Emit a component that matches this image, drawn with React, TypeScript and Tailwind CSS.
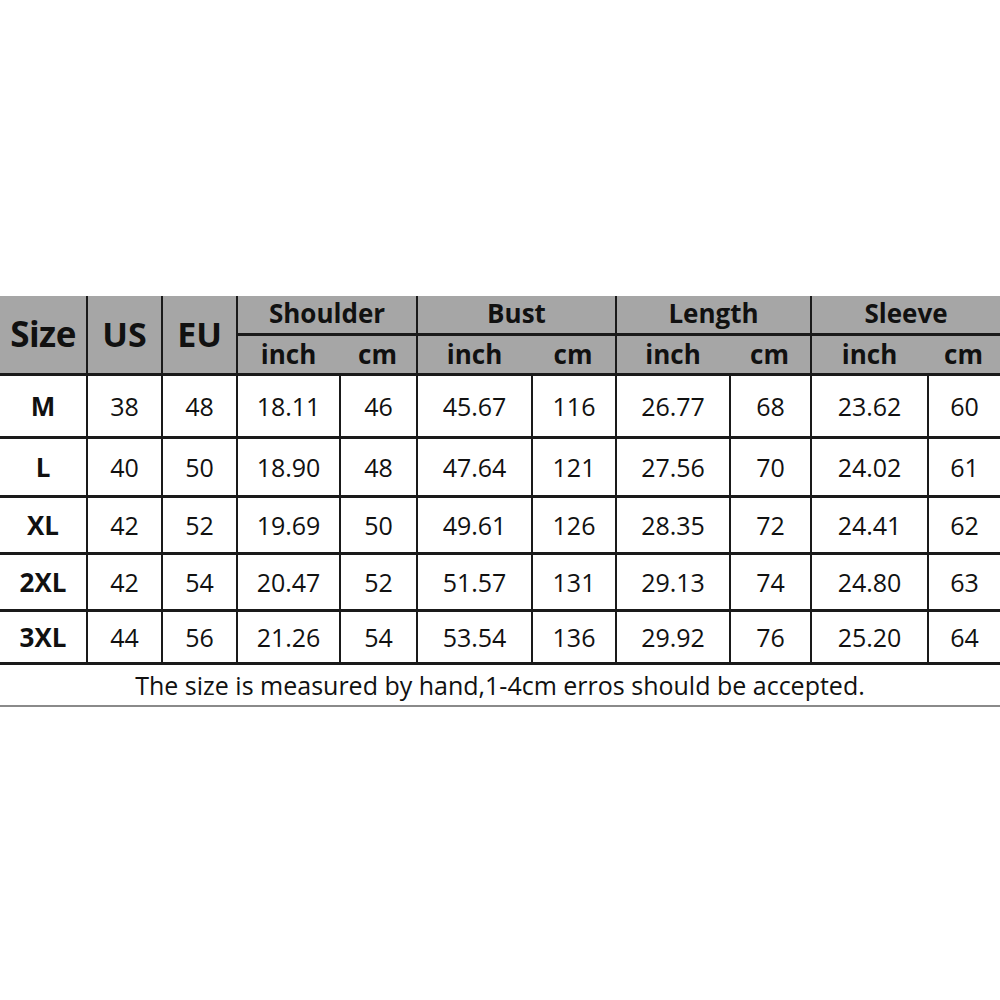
import React from 'react';

const rows = [
    ['M', '38', '48', '18.11', '46', '45.67', '116', '26.77', '68', '23.62', '60'],
    ['L', '40', '50', '18.90', '48', '47.64', '121', '27.56', '70', '24.02', '61'],
    ['XL', '42', '52', '19.69', '50', '49.61', '126', '28.35', '72', '24.41', '62'],
    ['2XL', '42', '54', '20.47', '52', '51.57', '131', '29.13', '74', '24.80', '63'],
    ['3XL', '44', '56', '21.26', '54', '53.54', '136', '29.92', '76', '25.20', '64'],
];

// row heights follow the picture, the source image was scaled unevenly
const rowHeights = ['h-[63px]', 'h-[59px]', 'h-[57px]', 'h-[57px]', 'h-[53px]'];

const groups = ['Shoulder', 'Bust', 'Length', 'Sleeve'];

const cols = 'grid grid-cols-[86px_75px_75px_103px_77px_115px_84px_114px_81px_117px_73px]';

export default function App() {
    return (
        <div className="w-[1000px] h-[1000px] bg-white text-[#111] font-['Open_Sans','Noto_Sans',sans-serif] pt-[296px]">
            {/* header */}
            <div className={`${cols} bg-[#a6a6a6] border-b-[3px] border-[#1a1a1a]`}>
                <div className="row-span-2 flex items-center justify-center text-[35px] font-bold tracking-[-0.5px]">Size</div>
                <div className="row-span-2 border-l-2 border-[#1a1a1a] flex items-center justify-center text-[34px] font-bold">US</div>
                <div className="row-span-2 border-l-2 border-[#1a1a1a] flex items-center justify-center text-[34px] font-bold">EU</div>
                {groups.map((g) => (
                    <div
                        key={g}
                        className="col-span-2 h-[37px] border-l-2 border-[#1a1a1a] flex items-center justify-center text-[26px] font-bold leading-none pb-[3px]"
                    >
                        {g}
                    </div>
                ))}
                {groups.map((g) => (
                    <React.Fragment key={g}>
                        <div className="h-[40px] border-l-2 border-t-[3px] border-[#1a1a1a] flex items-center justify-center text-[26px] font-bold leading-none pb-[2px]">
                            inch
                        </div>
                        <div className="h-[40px] border-t-[3px] border-[#1a1a1a] flex items-center justify-center text-[26px] font-bold leading-none pb-[2px]">
                            cm
                        </div>
                    </React.Fragment>
                ))}
            </div>

            {/* data */}
            {rows.map((r, i) => (
                <div key={r[0]} className={`${cols} ${rowHeights[i]} border-b-[3px] border-[#1a1a1a]`}>
                    {r.map((v, j) => (
                        <div
                            key={j}
                            className={`flex items-center justify-center leading-none ${j > 0 ? 'border-l-2 border-[#1a1a1a] text-[25px]' : 'font-bold text-[26px]'}`}
                        >
                            {v}
                        </div>
                    ))}
                </div>
            ))}

            <div className="h-[42px] border-b-2 border-[#8a8a8a] flex items-center justify-center text-[25px] leading-none">
                The size is measured by hand,1-4cm erros should be accepted.
            </div>
        </div>
    );
}
